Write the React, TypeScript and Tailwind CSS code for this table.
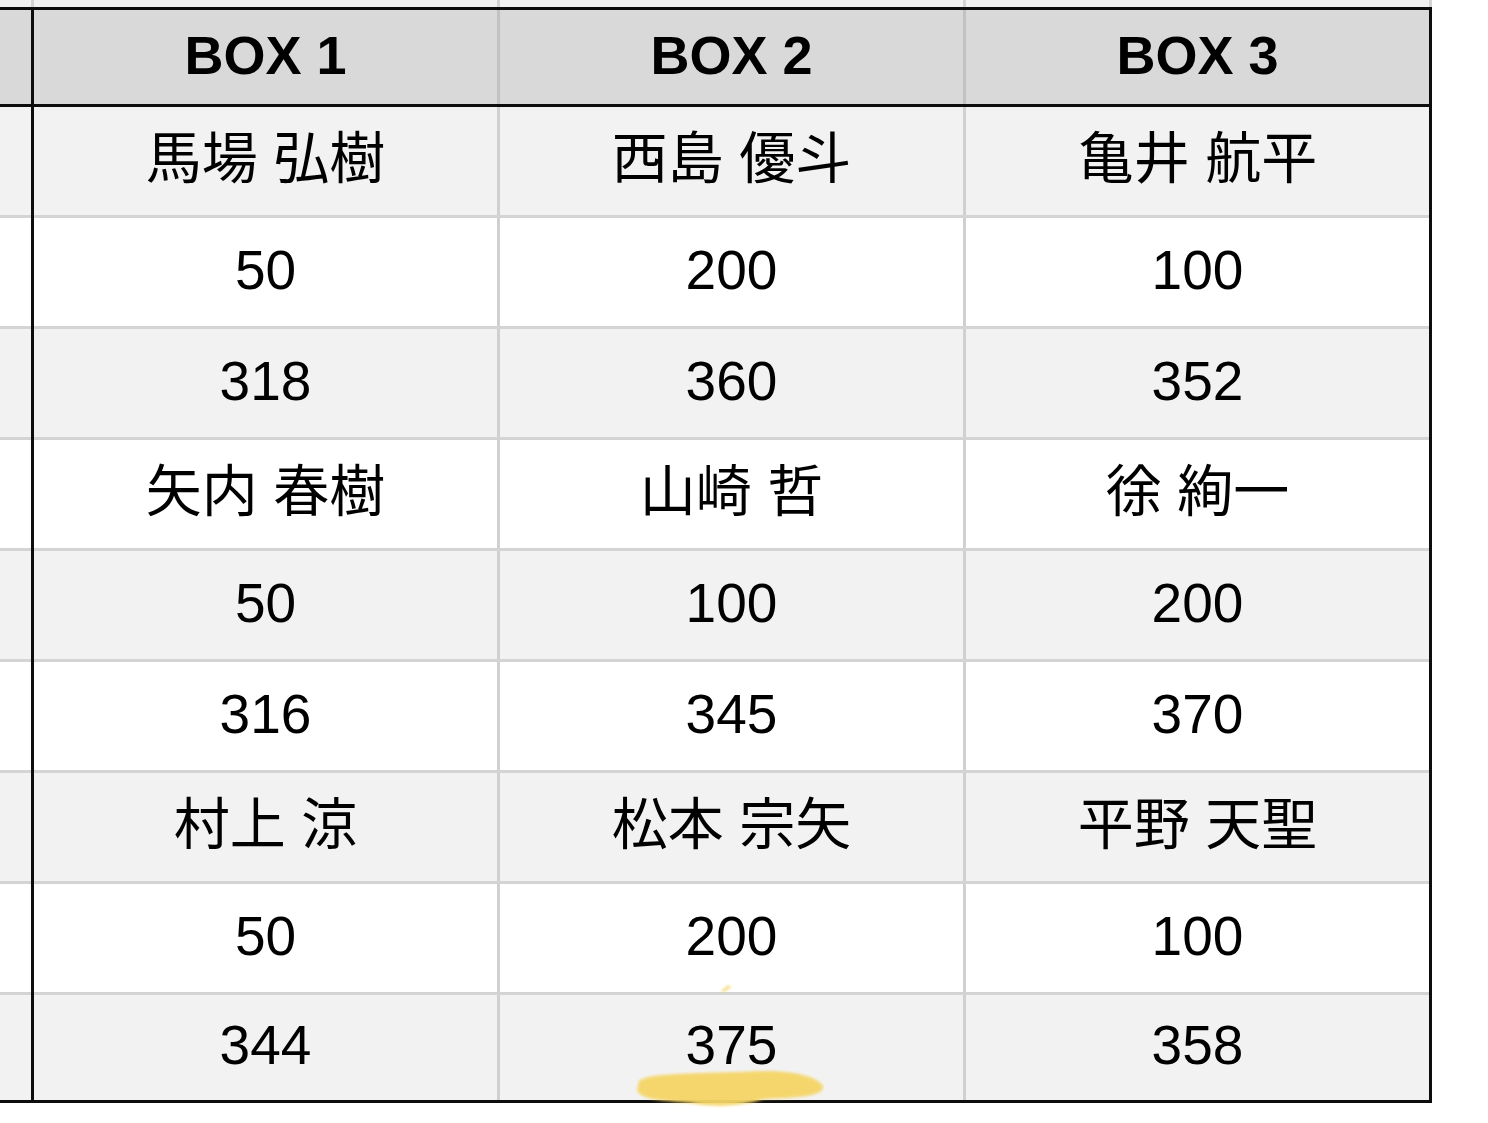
import React from "react";

type Row = { cells: string[]; bg: string; h: string; head?: boolean };

const ROWS: Row[] = [
	{ cells: ["馬場 弘樹", "西島 優斗", "亀井 航平"], bg: "bg-[#f2f2f2]", h: "h-[108px]" },
	{ cells: ["50", "200", "100"], bg: "bg-white", h: "h-[108px]" },
	{ cells: ["318", "360", "352"], bg: "bg-[#f2f2f2]", h: "h-[108px]" },
	{ cells: ["矢内 春樹", "山崎 哲", "徐 絢一"], bg: "bg-white", h: "h-[108px]" },
	{ cells: ["50", "100", "200"], bg: "bg-[#f2f2f2]", h: "h-[108px]" },
	{ cells: ["316", "345", "370"], bg: "bg-white", h: "h-[108px]" },
	{ cells: ["村上 涼", "松本 宗矢", "平野 天聖"], bg: "bg-[#f2f2f2]", h: "h-[108px]" },
	{ cells: ["50", "200", "100"], bg: "bg-white", h: "h-[108px]" },
	{ cells: ["344", "375", "358"], bg: "bg-[#f2f2f2]", h: "h-[105px]" },
];

const FONT = {
	fontFamily: "'Liberation Sans', 'Noto Sans CJK JP', sans-serif",
};

function BlackRule() {
	return <div className="h-[3px] w-[1432px] bg-[#0d0d0d]" />;
}

function LightRule() {
	return (
		<div className="flex h-[3px] w-[1432px]">
			<div className="w-[31px] bg-[#d4d4d4]" />
			<div className="w-[3px] bg-[#0d0d0d]" />
			<div className="w-[1395px] bg-[#d4d4d4]" />
			<div className="w-[3px] bg-[#0d0d0d]" />
		</div>
	);
}

function TableRow({ cells, bg, h, head }: Row) {
	const sep = head ? "bg-[#c2c2c2]" : "bg-[#d0d0d0]";
	const isName = (c: string) => /[^\x00-\x7f]/.test(c);
	return (
		<div className={`flex ${h}`}>
			<div className={`w-[31px] ${bg}`} />
			<div className="w-[3px] bg-[#0d0d0d]" />
			{cells.map((c, i) => (
				<React.Fragment key={i}>
					{i > 0 && <div className={`w-[3px] ${sep}`} />}
					<div
						className={`flex w-[463px] items-center justify-center ${bg} leading-none text-black ${
							head
								? "text-[54px] font-bold"
								: isName(c)
									? "text-[56px] font-normal"
									: "text-[55px] font-normal"
						}`}
					>
						<span className="-mt-[4px]">{c}</span>
					</div>
				</React.Fragment>
			))}
			<div className="w-[3px] bg-[#0d0d0d]" />
		</div>
	);
}

export default function App() {
	return (
		<div
			className="relative h-[1123px] w-[1488px] overflow-hidden bg-white"
			style={FONT}
		>
			{/* tail of the row above, mostly scrolled off */}
			<div className="flex h-[7px] w-[1432px]">
				<div className="w-[31px] bg-[#f2f2f2]" />
				<div className="w-[3px] bg-[#d4d4d4]" />
				<div className="w-[463px] bg-[#f2f2f2]" />
				<div className="w-[3px] bg-[#d4d4d4]" />
				<div className="w-[463px] bg-[#f2f2f2]" />
				<div className="w-[3px] bg-[#d4d4d4]" />
				<div className="w-[463px] bg-[#f2f2f2]" />
				<div className="w-[3px] bg-[#d4d4d4]" />
			</div>
			<BlackRule />
			<TableRow
				cells={["BOX 1", "BOX 2", "BOX 3"]}
				bg="bg-[#d9d9d9]"
				h="h-[94px]"
				head
			/>
			<BlackRule />
			{ROWS.map((r, i) => (
				<React.Fragment key={i}>
					{i > 0 && <LightRule />}
					<TableRow {...r} />
				</React.Fragment>
			))}
			<BlackRule />

			{/* highlighter mark under 375 */}
			<svg
				className="pointer-events-none absolute left-0 top-0"
				width="1488"
				height="1123"
			>
				<defs>
					<filter id="soft" x="-10%" y="-50%" width="120%" height="200%">
						<feGaussianBlur stdDeviation="1.4" />
					</filter>
				</defs>
				<g fill="#f5d566" filter="url(#soft)" opacity="0.95">
					<path d="M639 1081 C650 1072 700 1074 760 1071 C794 1070 818 1077 823 1086 C825 1096 800 1098 764 1099 C744 1106 712 1108 690 1103 C666 1101 640 1100 637 1090 Z" />
					<path d="M721 991 L729 985 L731 987 L724 992 Z" />
				</g>
			</svg>
		</div>
	);
}
